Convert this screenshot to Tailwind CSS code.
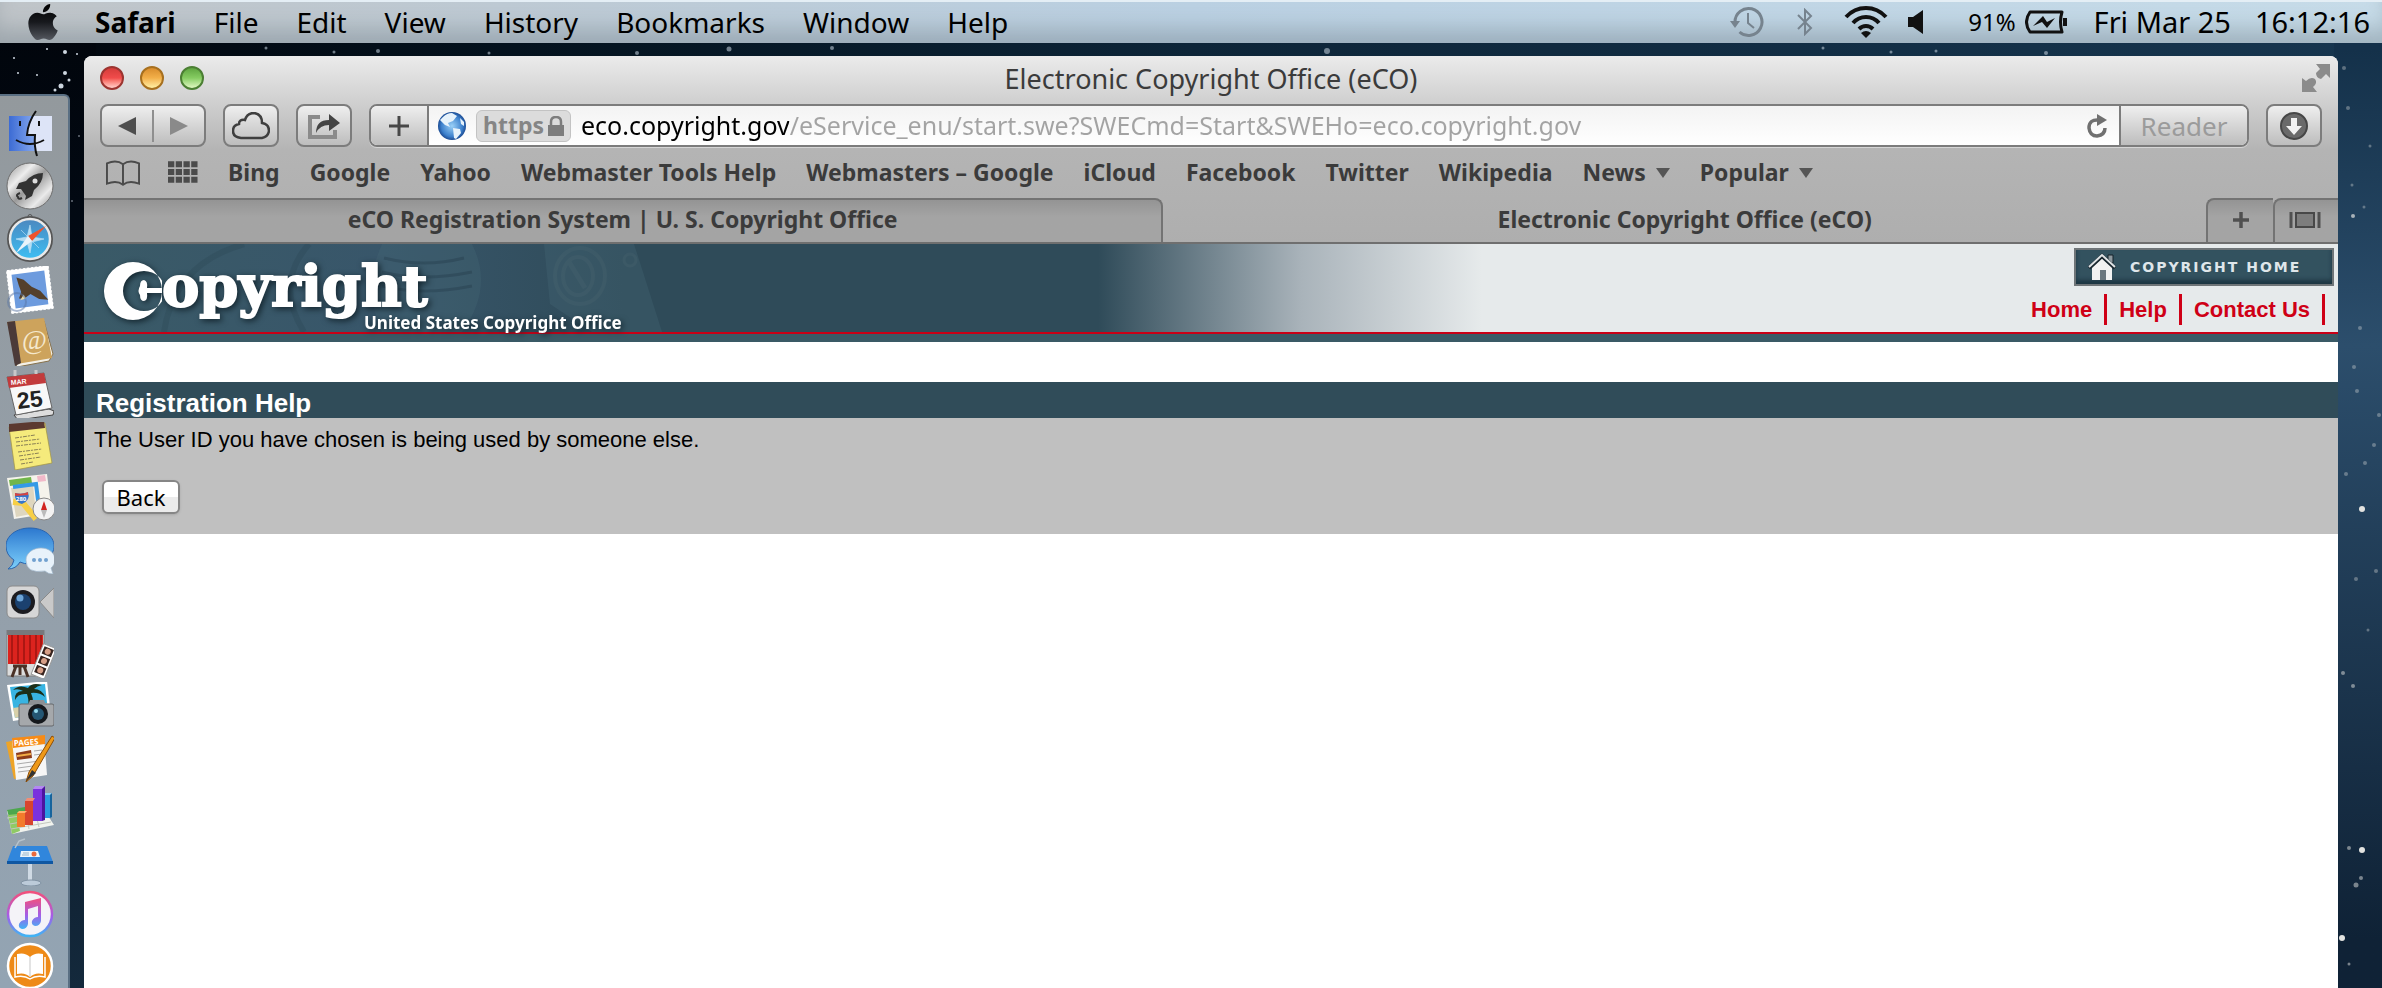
<!DOCTYPE html>
<html lang="en">
<head>
  <meta charset="UTF-8">
  <meta name="viewport" content="width=device-width, initial-scale=1.0">
  <title>Electronic Copyright Office (eCO)</title>
  <script src="https://cdn.jsdelivr.net/npm/@tailwindcss/browser@4"></script>
</head>
<body class="relative h-screen overflow-hidden flex flex-col bg-[#03101c] font-['Noto_Sans','Open_Sans',sans-serif] text-black">

  <!-- Desktop wallpaper -->
  <div class="absolute inset-0 -z-10 bg-linear-to-r from-[#01060c] via-[#0d2538] to-[#17364f]"></div>
  <div class="absolute inset-y-0 left-0 w-24 -z-10 bg-linear-to-b from-[#01050b] via-[#04101d] to-[#14293c]"></div>
  <div class="absolute inset-y-0 right-0 w-12 -z-10 bg-linear-to-b from-[#14314a] from-5% via-[#2c4e6c] via-35% to-[#0f2236] to-95%"></div>
  <svg class="absolute left-0 top-11 w-24 h-52 -z-10" viewBox="0 0 96 208" fill="#cdd6df">
    <circle cx="14" cy="14" r="1"/><circle cx="47" cy="5" r="1"/><circle cx="65" cy="8" r="2"/><circle cx="77" cy="10" r="1"/>
    <circle cx="65" cy="29" r="2"/><circle cx="61" cy="42" r="2.5"/><circle cx="69" cy="36" r="1.5"/><circle cx="55" cy="46" r="1.5"/>
    <circle cx="18" cy="29" r="1"/><circle cx="37" cy="31" r="1"/><circle cx="79" cy="92" r="1" opacity=".5"/><circle cx="72" cy="157" r="1" opacity=".5"/>
  </svg>
  <svg class="absolute left-0 top-11 w-full h-3 -z-10" viewBox="0 0 2382 12" preserveAspectRatio="none" fill="#b8c6d2" opacity=".6">
    <circle cx="266" cy="4" r="1.5"/><circle cx="334" cy="8" r="1.5"/><circle cx="378" cy="7" r="2"/><circle cx="489" cy="9" r="1.5"/><circle cx="637" cy="9" r="2"/>
    <circle cx="729" cy="5" r="2.5"/><circle cx="832" cy="4" r="2"/><circle cx="1327" cy="7" r="3"/><circle cx="1823" cy="4" r="1.5"/><circle cx="1891" cy="8" r="1.5"/><circle cx="1936" cy="7" r="1.5"/><circle cx="2046" cy="9" r="2"/>
  </svg>
  <svg class="absolute right-0 top-0 w-11 h-[988px] -z-10" viewBox="0 0 44 988" fill="#e3e3e0">
    <g opacity=".35"><circle cx="6" cy="68" r="2"/><circle cx="10" cy="108" r="2"/><circle cx="14" cy="185" r="1.5"/><circle cx="32" cy="146" r="1.5"/><circle cx="26" cy="207" r="1.5"/><circle cx="22" cy="328" r="2"/><circle cx="16" cy="367" r="2"/><circle cx="19" cy="391" r="2"/><circle cx="41" cy="415" r="2"/><circle cx="36" cy="445" r="2"/><circle cx="27" cy="463" r="2"/><circle cx="8" cy="474" r="2"/><circle cx="38" cy="571" r="2"/><circle cx="18" cy="579" r="2"/><circle cx="30" cy="630" r="1.5"/></g>
    <circle cx="15" cy="216" r="2" opacity=".7"/>
    <circle cx="24" cy="509" r="3"/><circle cx="24" cy="850" r="3"/><circle cx="4" cy="938" r="3"/>
    <g opacity=".5"><circle cx="5" cy="673" r="2"/><circle cx="15" cy="686" r="2"/><circle cx="11" cy="848" r="2"/><circle cx="18" cy="885" r="2.5"/><circle cx="23" cy="878" r="2"/><circle cx="11" cy="964" r="1.5"/></g>
  </svg>

  <!-- Menu bar -->
  <header class="h-[43px] shrink-0 flex items-center pl-7 pr-3 text-[28px] leading-none whitespace-nowrap bg-linear-to-r from-[#bfc4c8] via-[#bad0e2] to-[#c6dbe8] shadow-[inset_0_2px_0_#e4eef5,inset_0_-20px_20px_-6px_#6e7d8766]">
    <svg class="w-[30px] h-9 mr-[37px]" viewBox="2 0 20 24" preserveAspectRatio="none">
      <defs><linearGradient id="apple" x1="0" y1="0" x2="0" y2="1"><stop offset="0" stop-color="#000"/><stop offset=".5" stop-color="#17191d"/><stop offset="1" stop-color="#54585f"/></linearGradient></defs>
      <path fill="url(#apple)" d="M12.152 6.896c-.948 0-2.415-1.078-3.96-1.04-2.04.027-3.91 1.183-4.961 3.014-2.117 3.675-.546 9.103 1.519 12.09 1.013 1.454 2.208 3.09 3.792 3.039 1.52-.065 2.09-.987 3.935-.987 1.831 0 2.35.987 3.96.948 1.637-.026 2.676-1.48 3.676-2.948 1.156-1.688 1.636-3.325 1.662-3.415-.039-.013-3.182-1.221-3.22-4.857-.026-3.04 2.48-4.494 2.597-4.559-1.429-2.09-3.623-2.324-4.39-2.376-2-.156-3.675 1.09-4.61 1.09zM15.53 3.83c.843-1.012 1.4-2.427 1.245-3.83-1.207.052-2.662.805-3.532 1.818-.78.896-1.454 2.338-1.273 3.714 1.338.104 2.715-.688 3.559-1.701"/>
    </svg>
    <nav class="flex items-center gap-[38px]">
      <button class="font-bold">Safari</button>
      <button>File</button>
      <button>Edit</button>
      <button>View</button>
      <button>History</button>
      <button>Bookmarks</button>
      <button>Window</button>
      <button>Help</button>
    </nav>
    <div class="ml-auto flex items-center">
      <svg class="w-[34px] h-8 mr-[33px]" viewBox="0 0 34 32" fill="none" stroke="#76838e" stroke-width="3">
        <path d="M5 16A13.5 13.5 0 1 1 9.5 26"/><path d="M18 7v10l6 5" stroke-width="2"/><path d="M0 15h10l-5 7z" fill="#76838e" stroke="none"/>
      </svg>
      <svg class="w-4 h-7 mr-[31px]" viewBox="0 0 16 28" fill="none" stroke="#76838e" stroke-width="2"><path d="M1 7l13 13-6 6V2l6 6L1 21"/></svg>
      <svg class="w-11 h-8 mr-5" viewBox="0 0 44 32" fill="none" stroke="#111" stroke-width="4">
        <path d="M2 11C13-1 31-1 42 11"/><path d="M9 17c7-8 19-8 26 0"/><path d="M15 23c4-4 10-4 14 0"/><path d="M17 27q5-4 10 0l-5 5z" fill="#111" stroke="none"/>
      </svg>
      <svg class="w-4 h-6 mr-[44px]" viewBox="0 0 16 24" fill="#111"><path d="M0 7h5L15 0v24L5 17H0z"/></svg>
      <span class="text-2xl leading-none mr-[9px]">91%</span>
      <svg class="w-[43px] h-6 mr-[26px]" viewBox="0 0 43 24" fill="none" stroke="#111" stroke-width="3">
        <path d="M5 2h32q-3 10 0 20H5q-7-10 0-20z" stroke-linejoin="round"/><path d="M8 16l10-10 4 6 8-4-8 10-5-6z" fill="#111" stroke="none"/><path d="M40 8v8" stroke-width="4"/>
      </svg>
      <span class="mr-6 text-[29px] leading-none">Fri Mar 25</span>
      <time class="text-[29px] leading-none">16:12:16</time>
    </div>
  </header>

  <div class="flex-1 min-h-0 flex">

    <!-- Dock -->
    <aside class="w-[70px] shrink-0 mt-[51px] mr-[14px] pl-1.5 pt-3.5 flex flex-col gap-1 overflow-hidden rounded-tr-md border-t-2 border-r-2 border-[#5a6f83] bg-linear-to-b from-[#93999d] via-[#949fa9] to-[#93a4b3]">
      <!-- Finder -->
      <svg class="size-12 shrink-0" viewBox="0 0 48 48">
        <defs><linearGradient id="fin"><stop offset="0" stop-color="#3c6bd4"/><stop offset="1" stop-color="#85a8ee"/></linearGradient></defs>
        <path d="M3 6h43v35H3z" fill="#dde4f7"/><path d="M3 6h25q-6 10-7 19h7q0 8 1 16H3z" fill="url(#fin)"/>
        <path d="M30 1q-8 11-9 24h8q-1 12 2 21M10 30q14 8 28 0M14 11v5M33 11v5" fill="none" stroke="#111" stroke-width="2"/>
      </svg>
      <!-- Launchpad -->
      <svg class="size-12 shrink-0" viewBox="0 0 48 48">
        <defs><linearGradient id="lp" x1="0" y1="0" x2="1" y2="1"><stop offset="0" stop-color="#8e8e8e"/><stop offset=".3" stop-color="#eee"/><stop offset=".5" stop-color="#9a9a9a"/><stop offset=".75" stop-color="#eaeaea"/><stop offset="1" stop-color="#888"/></linearGradient></defs>
        <circle cx="24" cy="24" r="23" fill="url(#lp)" stroke="#6f6f6f"/>
        <path d="M37 11q-10 0-17 8l-7 2-3 6 5 0 5 7-1 4 7-4 2-6q9-7 9-17z" fill="#333"/><circle cx="29" cy="19" r="2.5" fill="#ddd"/>
        <path d="M14 31q-5 2-2 4 0 3 4 1" fill="none" stroke="#333" stroke-width="2"/>
      </svg>
      <!-- Safari -->
      <svg class="size-12 shrink-0" viewBox="0 0 48 48">
        <defs><linearGradient id="saf" x1="0" y1="0" x2="0" y2="1"><stop offset="0" stop-color="#4c86bd"/><stop offset="1" stop-color="#3cc0f5"/></linearGradient></defs>
        <circle cx="24" cy="2.5" r="2" fill="none" stroke="#555"/><circle cx="24" cy="25" r="21.5" fill="url(#saf)" stroke="#555" stroke-width="3"/><circle cx="24" cy="25" r="20" fill="none" stroke="#e9e9e9" stroke-width="2.5"/>
        <path d="M24 11l2 12 12 2-12 3-2 11-3-11-11-3 11-2zM15 16l18 18M15 34l18-18" fill="#b5ddf3" stroke="#b5ddf3" stroke-width=".7"/>
        <path d="M40 12L22 22l4 5z" fill="#f0532c"/><path d="M10 39l12-17 4 5z" fill="#e9f3fa"/>
      </svg>
      <!-- Mail -->
      <svg class="size-12 shrink-0" viewBox="0 0 48 48">
        <g transform="rotate(-7 24 24)"><path d="M5 4h38v39H5z" fill="#6d9bde" stroke="#fff" stroke-width="5"/><path d="M2 1h44v45H2z" fill="none" stroke="#949ca4" stroke-width="2" stroke-dasharray="1.5 2.5"/>
        <path d="M12 10l7 3 7 8 8 5 7 10-9-2-8-6-7 4-5-1 3-6q-2-8-3-15z" fill="#54402c"/><path d="M17 28l-4 5 6-1z" fill="#e8d9a8"/></g>
        <circle cx="11" cy="36" r="9" fill="none" stroke="#5a75a3" stroke-width="2" opacity=".5"/>
      </svg>
      <!-- Contacts -->
      <svg class="size-12 shrink-0" viewBox="0 0 48 48">
        <path d="M38 3l9 33-4 7-32 6-2-5z" fill="#f4f1e8" stroke="#87714b"/><path d="M1 4l37-4 8 40-35 6z" fill="#cda35c"/><path d="M1 4l8-1 6 42-6 3z" fill="#4b3a38"/>
        <text x="16" y="31" font-size="27" fill="#f5e8cc" font-family="Liberation Serif, serif">@</text>
      </svg>
      <!-- Calendar -->
      <svg class="size-12 shrink-0" viewBox="0 0 48 48">
        <path d="M8 45l35-6 5 2-1 4-35 5z" fill="#ddd" stroke="#444"/><path d="M1 7l37-4 8 35-36 7z" fill="#f8f8f8" stroke="#666"/><path d="M1 7l37-4 2 10L3 18z" fill="#c23b3c"/>
        <path d="M9 0v6M30-2v6" stroke="#c8c8c8" stroke-width="3"/>
        <text x="5" y="15" font-size="7" font-weight="700" fill="#fff" transform="rotate(-5 5 15)" font-family="Liberation Sans, sans-serif">MAR</text>
        <text x="12" y="39" font-size="23" font-weight="700" fill="#222" transform="rotate(-7 12 39)" font-family="Liberation Sans, sans-serif">25</text>
      </svg>
      <!-- Notes -->
      <svg class="size-12 shrink-0" viewBox="0 0 48 48">
        <path d="M3 5l36-4 7 40-37 7z" fill="#f5ea7c" stroke="#a29342" stroke-width=".7"/><path d="M3 2l35-3 1 7-36 4z" fill="#5b3930"/>
        <path d="M9 16l20-3M10 20l24-3M10 24l25-3M12 30l24-3M13 34l20-3M14 38l21-3M15 42l12-2" stroke="#8a8055" stroke-dasharray="4 1 2 1"/>
      </svg>
      <!-- Maps -->
      <svg class="size-12 shrink-0" viewBox="0 0 48 48">
        <path d="M1 4l40-4 5 39-38 6z" fill="#f5f3ec"/><path d="M3 6l22-3 1 6-22 3z" fill="#71b64a"/><path d="M31 2l8-1 1 6-8 1z" fill="#f1b9c9"/><path d="M5 14l22-3 3 28-20 4z" fill="#ded6bf"/>
        <path d="M7 13l23-3 3 24" fill="none" stroke="#349ae6" stroke-width="4"/><path d="M7 28l10 1 13 16" fill="none" stroke="#f7cf46" stroke-width="6"/>
        <path d="M9 19q7 2 13-1 3 8-6 12-8-2-7-11z" fill="#3675cb"/><path d="M9 19q7 2 13-1v3l-13 1z" fill="#d64340"/><text x="10" y="27" font-size="6" font-weight="700" fill="#fff">280</text>
        <circle cx="38" cy="35" r="11" fill="#f3f3f3" stroke="#888"/><path d="M35 36h6l-3-9z" fill="#d12422"/><path d="M35 36h6l-3 8z" fill="#bbb"/>
      </svg>
      <!-- Messages -->
      <svg class="size-12 shrink-0" viewBox="0 0 48 48">
        <defs><linearGradient id="msg" x1="0" y1="0" x2="0" y2="1"><stop offset="0" stop-color="#2c78cf"/><stop offset="1" stop-color="#7dd0fb"/></linearGradient></defs>
        <path d="M24 2c14 0 24 8 24 18S38 38 24 38q-6 0-10-2-4 7-12 7 5-3 6-9Q0 29 0 20C0 10 10 2 24 2z" fill="url(#msg)" stroke="#2b65ae"/>
        <path d="M35 22c8 0 14 5 14 12 0 4-2 6-4 8l2 6q-5 0-8-3-19 3-19-11c0-7 7-12 15-12z" fill="#e8f2fa" stroke="#a3b9cd" stroke-width=".7"/>
        <g fill="#71a1cf"><circle cx="28" cy="34" r="2"/><circle cx="34" cy="34" r="2"/><circle cx="40" cy="34" r="2"/></g>
      </svg>
      <!-- FaceTime -->
      <svg class="size-12 shrink-0" viewBox="0 0 48 48">
        <rect x="1" y="8" width="32" height="32" rx="5" fill="#d6d6d6" stroke="#8a8a8a"/><path d="M34 24L48 10v30z" fill="#c9c9c9" stroke="#8a8a8a"/>
        <circle cx="17" cy="24" r="12" fill="#1c1c20"/><circle cx="17" cy="24" r="8" fill="#1b416f"/><circle cx="14" cy="20" r="3.5" fill="#6da5d8"/>
      </svg>
      <!-- Photo Booth -->
      <svg class="size-12 shrink-0" viewBox="0 0 48 48">
        <path d="M1 0h37v46H1z" fill="#dcdcdc" stroke="#7d7d7d"/><path d="M1 0h37v5H1z" fill="#77787c"/><path d="M2 5h35v29H2z" fill="#dc231e"/>
        <path d="M6 5v29M12 5v29M18 5v29M24 5v29M30 5v29M35 5v29" stroke="#9c1411" stroke-width="1.5"/>
        <path d="M7 36h14M10 36L6 47M18 36l4 11M14 36v9" stroke="#4b3227" stroke-width="3"/>
        <g transform="rotate(22 38 31)"><path d="M31 15h14v33H31z" fill="#fff" stroke="#999"/><path d="M33 17h10v8H33zM33 27h10v8H33zM33 37h10v8H33z" fill="#38241f"/><g fill="#d79f87"><circle cx="38" cy="21" r="3"/><circle cx="38" cy="31" r="3"/><circle cx="38" cy="41" r="3"/></g></g>
      </svg>
      <!-- iPhoto -->
      <svg class="size-12 shrink-0" viewBox="0 0 48 48">
        <path d="M1 3l40-4 4 34-38 6z" fill="#fff"/><path d="M4 5l35-3 3 28-33 6z" fill="#38b4e2"/><path d="M7 26l34-5 1 9-33 6z" fill="#d8d0a9"/>
        <path d="M21 30q3-9 0-18-9-1-12 6-1-9 8-9-5-3-10-1 6-6 15-2 4-6 14-3-5 1-8 4 8 0 11 8-6-5-14-4 4 9 0 19z" fill="#1c2f19"/>
        <rect x="13" y="22" width="35" height="22" rx="2" fill="#a5a8ab" stroke="#66696d"/><path d="M24 18h14l2 5H22z" fill="#8d9094"/><circle cx="32" cy="32" r="10" fill="#15181c"/><circle cx="32" cy="32" r="6" fill="#245673"/><circle cx="30" cy="29" r="2" fill="#98dcef"/>
      </svg>
      <!-- Pages -->
      <svg class="size-12 shrink-0" viewBox="0 0 48 48">
        <path d="M0 8l35-6 5 36-32 7z" fill="#eea427"/><path d="M6 6l32-4 3 39-31 5z" fill="#f6f6f6"/><path d="M6 4l33-3v9L7 14z" fill="#f78b17"/>
        <text x="8" y="12" font-size="8" font-weight="700" fill="#fff" transform="rotate(-4 8 12)">PAGES</text>
        <path d="M10 19l15-3 1 8-15 2z" fill="#8d3c1b"/><path d="M11 21l14-2v2l-14 2z" fill="#f2ad47"/><path d="M11 30l22-3M12 34l22-3M12 38l16-2M28 17l8-1M28 21l8-1" stroke="#aaa"/>
        <path d="M46 2l3 2-22 38-7 6 3-10z" fill="#ee9817" stroke="#8b4d0a"/><path d="M26 36l4 3-10 8z" fill="#333"/>
      </svg>
      <!-- Numbers -->
      <svg class="size-12 shrink-0" viewBox="0 0 48 48">
        <path d="M1 25l34-6 13 20-42 9z" fill="#f1f3ee"/><path d="M1 24l18-3v7L3 31z" fill="#4da64d"/><path d="M2 29l9-1 3 17-8 3z" fill="#8fca65"/><path d="M1 32l37-6M4 38l38-7M5 43l40-7M20 25l3 18M29 25l4 16" stroke="#c3c8be"/>
        <path d="M11 27h8v14h-8z" fill="#f27b2b"/><path d="M19 15h8v24h-8z" fill="#d8452e"/><path d="M27 3h9v32h-9z" fill="#7a32dd"/><path d="M37 9h7v23h-7z" fill="#2c9be0"/>
        <path d="M11 27l2-2h8l-2 2z" fill="#ffb26f"/><path d="M19 15l2-3h8l-2 3z" fill="#f08d77"/><path d="M27 3l2-3h10l-3 3z" fill="#b388f2"/><path d="M37 9l2-2h7l-2 2z" fill="#8accf2"/><path d="M36 3l3-3v34l-3 1z" fill="#4c149f"/><path d="M44 9l2-2v24l-2 1z" fill="#17649d"/>
      </svg>
      <!-- Keynote -->
      <svg class="size-12 shrink-0" viewBox="0 0 48 48">
        <path d="M24 22v22" stroke="#cfdae4" stroke-width="4"/><ellipse cx="25" cy="45" rx="10" ry="3" fill="#bccbd9" stroke="#8193a4"/>
        <path d="M7 8h34l6 16H1z" fill="#3086dc"/><path d="M1 23h46v3H1z" fill="#0f57a2"/><path d="M15 13h17l2 6H14z" fill="#eaf4fb"/><circle cx="28" cy="16" r="2.5" fill="#e96a3d"/><path d="M17 15h6M16 17h7" stroke="#9bb6c8"/>
        <path d="M9 10L13 3l6-2" fill="none" stroke="#b7c3cc" stroke-width="1.5"/>
      </svg>
      <!-- iTunes -->
      <svg class="size-12 shrink-0" viewBox="0 0 48 48">
        <defs><linearGradient id="itn" x1="0" y1="0" x2="0" y2="1"><stop offset="0" stop-color="#f3507b"/><stop offset=".55" stop-color="#a45de8"/><stop offset="1" stop-color="#3fb4f5"/></linearGradient></defs>
        <circle cx="24" cy="24" r="22" fill="#f4f3f8" stroke="url(#itn)" stroke-width="2.5"/>
        <path d="M19 12l16-4v23q-1 5-6 5-4-1-3-5 2-4 6-4V16l-10 3v15q-1 5-6 5-4-1-3-5 2-4 6-4z" fill="url(#itn)"/>
      </svg>
      <!-- iBooks -->
      <svg class="size-12 shrink-0" viewBox="0 0 48 48">
        <circle cx="24" cy="24" r="22" fill="#ee8a17" stroke="#fff" stroke-width="2.5"/>
        <path d="M24 15q-5-5-13-3v20q8-2 13 3 5-5 13-3V12q-8-2-13 3z" fill="#fff"/><path d="M24 15v20" stroke="#c7c7c7"/><path d="M9 15v20q9-2 15 2 6-4 15-2V15" fill="none" stroke="#fff" stroke-width="1.5"/>
      </svg>
    </aside>

    <!-- Browser window -->
    <main class="flex-1 min-w-0 mt-[13px] mr-11 flex flex-col rounded-t-lg overflow-hidden bg-white">
      <div class="bg-linear-to-b from-[#ebebeb] from-0% via-[#b4b4b4] via-50% to-[#aeaeae] text-[#3b3b3b]">

        <!-- Title row -->
        <div class="relative h-12 pb-1 flex items-center justify-center">
          <div class="absolute left-4 top-2.5 flex gap-4">
            <button aria-label="Close" class="size-6 rounded-full border-2 border-[#9c3430] bg-linear-to-b from-[#d53c3a] via-[#f14c4b] to-[#ffd0cd]"></button>
            <button aria-label="Minimize" class="size-6 rounded-full border-2 border-[#a7701f] bg-linear-to-b from-[#d98d2c] via-[#f3b049] to-[#fff1a4]"></button>
            <button aria-label="Zoom" class="size-6 rounded-full border-2 border-[#4b7f33] bg-linear-to-b from-[#5fa540] via-[#86cc62] to-[#e0f8c2]"></button>
          </div>
          <h1 class="text-[27px] leading-none">Electronic Copyright Office (eCO)</h1>
          <button aria-label="Full screen" class="absolute right-2 top-2">
            <svg class="w-7 h-7" viewBox="0 0 28 28" fill="#8b8b8b"><path d="M14 0h14v14l-4-4-5 5q-5-1-5-6l4-4zM0 14l4 3q5-5 9-2 3 4-2 8l4 5H0z"/></svg>
          </button>
        </div>

        <!-- Toolbar -->
        <div class="h-[43px] px-4 flex gap-[17px]">
          <div class="w-[106px] flex items-center rounded-lg border-2 border-[#7c7c7c] bg-linear-to-b from-[#efefef] to-[#bdbdbd]">
            <button aria-label="Back" class="flex-1 flex justify-center"><svg class="w-[18px] h-[18px]" viewBox="0 0 18 18" fill="#4e4e4e"><path d="M18 0v18L0 9z"/></svg></button>
            <span class="w-0.5 h-8 bg-[#8f8f8f]"></span>
            <button aria-label="Forward" class="flex-1 flex justify-center"><svg class="w-[18px] h-[18px]" viewBox="0 0 18 18" fill="#8a8a8a"><path d="M0 0v18l18-9z"/></svg></button>
          </div>
          <button aria-label="iCloud tabs" class="w-14 flex items-center justify-center rounded-lg border-2 border-[#7c7c7c] bg-linear-to-b from-[#efefef] to-[#bdbdbd]">
            <svg class="w-[38px] h-7" viewBox="0 0 38 28" fill="none" stroke="#3f3f3f" stroke-width="2.5"><path d="M9 26q-8-1-8-7 0-6 6-7 0-5 6-4 2-7 9-7 8 1 8 10 7 1 7 8-1 6-7 7z"/></svg>
          </button>
          <button aria-label="Share" class="w-14 flex items-center justify-center rounded-lg border-2 border-[#7c7c7c] bg-linear-to-b from-[#efefef] to-[#bdbdbd]">
            <svg class="w-8 h-[26px]" viewBox="0 0 32 26"><path d="M12 4H2v20h25v-7" fill="none" stroke="#8b8b8b" stroke-width="4"/><path d="M8 20Q8 7 21 7V1l11 9-11 8v-6Q12 12 8 20z" fill="#444"/></svg>
          </button>
          <div class="flex-1 min-w-0 flex rounded-lg border-2 border-[#7c7c7c] overflow-hidden bg-white shadow-[0_1px_0_#d6d6d6]">
            <button aria-label="Add bookmark" class="w-[58px] shrink-0 flex items-center justify-center border-r-2 border-[#7c7c7c] bg-linear-to-b from-[#efefef] to-[#bdbdbd]">
              <svg class="size-5" viewBox="0 0 20 20"><path d="M10 0v20M0 10h20" stroke="#484848" stroke-width="3"/></svg>
            </button>
            <div class="flex-1 min-w-0 flex items-center pl-[9px] pr-3 bg-linear-to-b from-[#f3f3f3] to-white">
              <svg class="size-7 shrink-0 mr-2.5" viewBox="0 0 28 28">
                <defs><radialGradient id="globe"><stop offset="0" stop-color="#9ad0f7"/><stop offset=".75" stop-color="#3c80cc"/><stop offset="1" stop-color="#1c4c94"/></radialGradient></defs>
                <circle cx="14" cy="14" r="14" fill="url(#globe)"/><path d="M5 5q4-4 9-4l5 3-4 5-5 2 2 4-5-2-5-5zM15 16l7 1 1 4-5 6-2-1zM22 6l4 4v4l-3-2z" fill="#e6f2fb"/>
              </svg>
              <span class="h-8 shrink-0 flex items-center gap-1 px-1.5 mr-2.5 rounded-md border border-[#c3c3c3] bg-[#dcdcdc] text-[#858585] text-[23px] leading-none font-bold">https
                <svg class="w-4 h-5" viewBox="0 0 16 20"><path d="M0 9h16v11H0z" fill="#7d7d7d"/><path d="M3 10V6q0-5 5-5t5 5v4" fill="none" stroke="#7d7d7d" stroke-width="2.5"/></svg>
              </span>
              <input aria-label="Address" type="text" value="eco.copyright.gov/eService_enu/start.swe?SWECmd=Start&amp;SWEHo=eco.copyright.gov" class="flex-1 min-w-0 h-9 text-[25px] outline-none bg-clip-text text-transparent bg-linear-[90deg,#000_208px,#a3a3a3_208px]">
              <button aria-label="Reload" class="shrink-0"><svg class="w-5 h-6" viewBox="0 0 20 24"><path d="M12 6Q2 5 2 14q1 8 8 8 8-1 8-8" fill="none" stroke="#707070" stroke-width="3.5"/><path d="M10 0l10 6-10 6z" fill="#707070"/></svg></button>
            </div>
            <button class="w-[128px] shrink-0 border-l-2 border-[#7c7c7c] bg-linear-to-b from-[#efefef] to-[#bdbdbd] text-[26px] leading-none text-[#9b9b9b]">Reader</button>
          </div>
          <button aria-label="Downloads" class="w-14 flex items-center justify-center rounded-lg border-2 border-[#7c7c7c] bg-linear-to-b from-[#efefef] to-[#bdbdbd]">
            <svg class="size-7" viewBox="0 0 28 28"><circle cx="14" cy="14" r="13" fill="#6a6a6a" stroke="#474747" stroke-width="2"/><path d="M11 6h6v8h5l-8 9-8-9h5z" fill="#f2f2f2"/></svg>
          </button>
        </div>

        <!-- Bookmarks bar -->
        <nav class="h-[51px] pl-[22px] flex items-center gap-[30px] text-[23px] leading-none font-bold whitespace-nowrap">
          <div class="flex items-center gap-7">
            <button aria-label="Show bookmarks"><svg class="w-[34px] h-[26px]" viewBox="0 0 35 26" fill="none" stroke="#4b4b4b" stroke-width="2"><path d="M17.5 4Q11-1 1 3v21q10-4 16.5 1Q24 20 34 24V3Q24-1 17.5 4zv20"/></svg></button>
            <button aria-label="Top sites"><svg class="w-[30px] h-[23px]" viewBox="0 0 31 23"><path d="M0 3h31M0 11h31M0 19h31" stroke="#4b4b4b" stroke-width="6" stroke-dasharray="6.5 1.5"/></svg></button>
          </div>
          <a href="#">Bing</a>
          <a href="#">Google</a>
          <a href="#">Yahoo</a>
          <a href="#">Webmaster Tools Help</a>
          <a href="#">Webmasters – Google</a>
          <a href="#">iCloud</a>
          <a href="#">Facebook</a>
          <a href="#">Twitter</a>
          <a href="#">Wikipedia</a>
          <button class="flex items-center gap-2.5">News <svg class="w-3.5 h-2.5" viewBox="0 0 14 10" fill="#555"><path d="M0 0h14L7 10z"/></svg></button>
          <button class="flex items-center gap-2.5">Popular <svg class="w-3.5 h-2.5" viewBox="0 0 14 10" fill="#555"><path d="M0 0h14L7 10z"/></svg></button>
        </nav>

        <!-- Tabs -->
        <div class="h-[46px] flex border-b-2 border-[#6f6f6f] text-[23px] leading-none font-bold">
          <button class="flex-[31] pb-1 rounded-tr-lg border-t-2 border-r-2 border-[#737373] bg-linear-to-b from-[#949494] to-[#a4a4a4] to-40%">eCO Registration System | U. S. Copyright Office</button>
          <button class="flex-[30] pb-0.5">Electronic Copyright Office (eCO)</button>
          <button aria-label="New tab" class="w-[67px] pb-0.5 flex items-center justify-center rounded-tl-lg border-t-2 border-l-2 border-[#737373] bg-linear-to-b from-[#949494] to-[#a4a4a4] to-40%">
            <svg class="size-4" viewBox="0 0 16 16"><path d="M8 0v16M0 8h16" stroke="#505050" stroke-width="3.5"/></svg>
          </button>
          <button aria-label="Show all tabs" class="w-[65px] pb-0.5 pr-1 flex items-center justify-center rounded-tl-lg border-t-2 border-l-2 border-[#737373] bg-linear-to-b from-[#949494] to-[#a4a4a4] to-40%">
            <svg class="w-8 h-4" viewBox="0 0 32 16"><path d="M7 1h18v14H7z" fill="#7d7d7d" stroke="#484848" stroke-width="2"/><path d="M2 0v16M30 0v16" stroke="#505050" stroke-width="3"/></svg>
          </button>
        </div>
      </div>

      <!-- Site header -->
      <div class="relative h-[90px] flex justify-between border-b-2 border-[#c90016] bg-linear-[90deg,#3a5a67_0,#38566a_300px,#2f4b59_540px,#2f4b59_45%,#a9b3ba_54%,#e6eaeb_62%,#e6eaeb]">
        <svg class="absolute left-0 top-0 w-[600px] h-[88px]" viewBox="0 0 600 88" fill="none" stroke="#55747f" opacity=".35">
          <path d="M80 88Q90 20 160 0M220 88Q190 40 225 0" stroke-width="6" stroke="#2c4856"/><path d="M298 0q-20 44 0 88h80q32-44 10-88z" fill="#456775" stroke="none"/><path d="M300 14q40 10 80 0M298 28q40 10 90 0M298 42q40 10 90 0" stroke="#2a4450" stroke-width="3"/>
          <path d="M460 0l90 0 28 88h-70L466 60z" fill="#456775" stroke="none"/><ellipse cx="496" cy="32" rx="25" ry="28" stroke-width="4"/><ellipse cx="494" cy="32" rx="15" ry="19" stroke-width="4"/><path d="M485 18l16 26" stroke-width="5"/><circle cx="546" cy="16" r="6" stroke-width="3"/>
        </svg>
        <a href="#" class="relative ml-5 mt-4 flex items-start text-white drop-shadow-[2px_2px_3px_#12232c]">
          <svg class="w-[58px] h-[62px]" viewBox="0 0 58 62" fill="#fff">
            <path fill-rule="evenodd" d="M29 2a29 29 0 1 0 0 58a29 29 0 1 0 0-58zM40 11a21 20 0 1 1 0 40a21 20 0 1 1 0-40z"/>
            <path d="M40 20q4 1 3 8h15v5H43q1 7-3 8-4 0-4-6-3-4 0-9 0-6 4-6z"/>
          </svg>
          <span class="font-['DejaVu_Serif',serif] font-bold text-[56px] leading-[60px] -mt-1 [-webkit-text-stroke:2px_white]">opyright</span>
          <span class="absolute left-[260px] top-[53px] text-[17px] leading-5 font-bold font-['Noto_Sans',sans-serif] whitespace-nowrap">United States Copyright Office</span>
        </a>
        <div class="relative pt-1 pr-1 flex flex-col items-end font-['Liberation_Sans',Arial,sans-serif] font-bold">
          <a href="#" class="w-[260px] h-[38px] pl-3 flex items-center gap-3.5 border-2 border-[#6f7578] bg-[#33525f] text-[#dfe6ea] tracking-[2px] shadow-[inset_0_-4px_4px_#1d3642]">
            <svg class="w-7 h-7" viewBox="0 0 28 28"><path d="M20 2h5v8h-5z" fill="#8d989e" stroke="#14232b"/><path d="M4 14L14 5l10 9v13H4z" fill="#f2f2f2"/><path d="M1 15L14 3l13 12" fill="none" stroke="#17252d" stroke-width="4"/><path d="M1 14L14 2l13 12" fill="none" stroke="#dfe3e5" stroke-width="2"/><path d="M12 17h6v10h-6z" fill="#6b777e"/></svg>
            <span class="font-['DejaVu_Sans',sans-serif] font-bold text-[14px]">COPYRIGHT HOME</span>
          </a>
          <nav class="mt-2 mr-[9px] h-[31px] flex items-stretch text-[22px] leading-8 text-[#cf0016]">
            <a href="#" class="pr-3 border-r-3">Home</a>
            <a href="#" class="px-3 border-r-3">Help</a>
            <a href="#" class="px-3 border-r-3">Contact Us</a>
          </nav>
        </div>
      </div>
      <div class="h-2 bg-[#3a5a66]"></div>

      <!-- Message -->
      <section class="mt-10 bg-[#c0c0c0] font-['Liberation_Sans',Arial,sans-serif]">
        <h2 class="h-9 pl-3 bg-[#304c59] text-white text-[26px] leading-[42px] font-bold">Registration Help</h2>
        <div class="px-2.5 pt-2 pb-5">
          <p class="text-[22px] leading-7">The User ID you have chosen is being used by someone else.</p>
          <button class="ml-2 mt-[26px] w-[78px] h-[34px] flex items-center justify-center rounded-md border-2 border-[#868686] bg-linear-to-b from-white from-50% to-[#ebebeb] to-50% font-['Noto_Sans',sans-serif] text-[22px] leading-none shadow-sm">Back</button>
        </div>
      </section>
    </main>
  </div>
</body>
</html>
